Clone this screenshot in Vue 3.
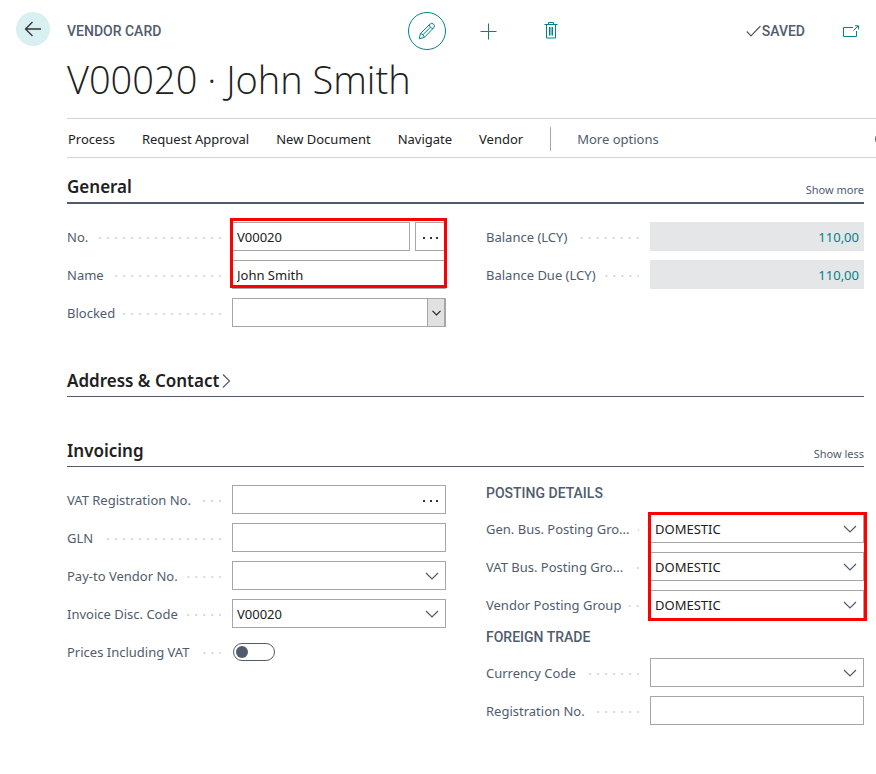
<script setup>
import { reactive } from 'vue'

const actions = ['Process', 'Request Approval', 'New Document', 'Navigate', 'Vendor']

const vendor = reactive({
  no: 'V00020',
  name: 'John Smith',
  blocked: '',
  balance: '110,00',
  balanceDue: '110,00',
  vatNo: '',
  gln: '',
  payTo: '',
  discCode: 'V00020',
  pricesInclVat: false,
  currency: '',
  registrationNo: ''
})

const balances = [
  { id: 'balance', label: 'Balance (LCY)' },
  { id: 'balanceDue', label: 'Balance Due (LCY)' }
]

const invoiceLookups = [
  { id: 'payTo', label: 'Pay-to Vendor No.' },
  { id: 'discCode', label: 'Invoice Disc. Code' }
]

const postingGroups = reactive([
  { id: 'gen-group', label: 'Gen. Bus. Posting Gro...', value: 'DOMESTIC' },
  { id: 'vat-group', label: 'VAT Bus. Posting Gro...', value: 'DOMESTIC' },
  { id: 'vendor-group', label: 'Vendor Posting Group', value: 'DOMESTIC' }
])
</script>

<template>
  <div class="page">
    <header class="top">
      <button class="back" type="button" aria-label="Back">
        <svg width="18" height="16" viewBox="0 0 18 16"><path d="M17 8H1.5M8.5 1L1.5 8l7 7" stroke-width="1.3" /></svg>
      </button>
      <div class="top-main">
        <span class="caps">VENDOR CARD</span>
        <div class="tools">
          <button class="tool edit" type="button" aria-label="Edit">
            <svg width="18" height="18" viewBox="0 0 18 18">
              <path d="M1.3 16.7l1.1-5L11.9 2.2a2.6 2.6 0 0 1 3.7 0 2.6 2.6 0 0 1 0 3.7L6.2 15.5zM2.4 11.7c1.9 0 3.8 1.9 3.8 3.8M11.4 2.8c.2 2.1 1.6 3.5 3.7 3.7M4.9 12.8l7.6-7.6" />
            </svg>
          </button>
          <button class="tool" type="button" aria-label="New">
            <svg width="17" height="17" viewBox="0 0 17 17"><path d="M8.5 0.5v16M0.5 8.5h16" /></svg>
          </button>
          <button class="tool" type="button" aria-label="Delete">
            <svg width="14" height="18" viewBox="0 0 14 18">
              <path d="M0.5 2.5h13M2.5 2.5v13.5h9v-13.5M4.5 2.5V0.5h5v2M5.5 5v8.5M7 5v8.5M8.5 5v8.5" />
            </svg>
          </button>
        </div>
        <div class="status">
          <svg width="16" height="12" viewBox="0 0 16 12"><path d="M0.8 6.5l4.2 4.3L14.5 1" stroke-width="1.2" /></svg>
          <span class="caps">SAVED</span>
          <button class="popout" type="button" aria-label="Open in new window">
            <svg width="17" height="12" viewBox="0 0 17 12">
              <path d="M10 2.5H0.5v9h13V6M10.5 5.5L15 1M12 0.8h3.5v3.5" />
            </svg>
          </button>
        </div>
      </div>
    </header>

    <main class="body">
      <h1>V00020 · John Smith</h1>

      <nav class="bar">
        <button v-for="a in actions" :key="a" type="button">{{ a }}</button>
        <button class="more" type="button">More options</button>
        <button class="info" type="button" aria-label="Details">
          <svg width="16" height="16" viewBox="0 0 16 16"><circle cx="8" cy="8" r="7.5" /><path d="M8 7v5M8 4v1" /></svg>
        </button>
      </nav>

      <div class="sections">
        <section>
          <div class="head strong">
            <h2>General</h2>
            <a href="#">Show more</a>
          </div>
          <div class="columns">
            <div class="rows">
              <div class="rows marked marked-vendor">
                <div class="row">
                  <label for="no">No.</label>
                  <span class="leader"></span>
                  <div class="split">
                    <input id="no" v-model="vendor.no" class="box" type="text" />
                    <button class="box assist" type="button" aria-label="Choose number">
                      <svg class="dots" width="16" height="4" viewBox="0 0 16 4"><path d="M0 2h2v2H0zM7 2h2v2H7zM13 2h2v2h-2z" /></svg>
                    </button>
                  </div>
                </div>
                <div class="row">
                  <label for="name">Name</label>
                  <span class="leader"></span>
                  <input id="name" v-model="vendor.name" class="box field" type="text" />
                </div>
              </div>
              <div class="row">
                <label for="blocked">Blocked</label>
                <span class="leader"></span>
                <div class="stack field">
                  <select id="blocked" v-model="vendor.blocked" class="box">
                    <option value=""></option>
                    <option>Payment</option>
                    <option>All</option>
                  </select>
                  <span class="drop">
                    <svg width="9" height="6" viewBox="0 0 9 6"><path d="M0.5 0.8l4 4 4-4" stroke-width="1.2" /></svg>
                  </span>
                </div>
              </div>
            </div>
            <div class="rows">
              <div v-for="b in balances" :key="b.id" class="row">
                <label :for="b.id">{{ b.label }}</label>
                <span class="leader"></span>
                <input :id="b.id" :value="vendor[b.id]" class="box field amount" type="text" readonly />
              </div>
            </div>
          </div>
        </section>

        <section>
          <div class="head">
            <h2>Address &amp; Contact</h2>
            <svg class="expand" width="9" height="16" viewBox="0 0 9 16"><path d="M1 1.5L7.5 8 1 14.5" stroke-width="1.2" /></svg>
          </div>
        </section>

        <section>
          <div class="head">
            <h2>Invoicing</h2>
            <a href="#">Show less</a>
          </div>
          <div class="columns">
            <div class="rows">
              <div class="row">
                <label for="vatNo">VAT Registration No.</label>
                <span class="leader"></span>
                <div class="stack field">
                  <input id="vatNo" v-model="vendor.vatNo" class="box" type="text" />
                  <svg class="dots end" width="16" height="4" viewBox="0 0 16 4"><path d="M0 2h2v2H0zM7 2h2v2H7zM13 2h2v2h-2z" /></svg>
                </div>
              </div>
              <div class="row">
                <label for="gln">GLN</label>
                <span class="leader"></span>
                <input id="gln" v-model="vendor.gln" class="box field" type="text" />
              </div>
              <div v-for="l in invoiceLookups" :key="l.id" class="row">
                <label :for="l.id">{{ l.label }}</label>
                <span class="leader"></span>
                <div class="stack field">
                  <select :id="l.id" v-model="vendor[l.id]" class="box">
                    <option value=""></option>
                    <option>V00020</option>
                  </select>
                  <svg class="chevron end" width="14" height="8" viewBox="0 0 14 8"><path d="M1 1l6 6 6-6" stroke-width="1.2" /></svg>
                </div>
              </div>
              <div class="row">
                <label for="prices">Prices Including VAT</label>
                <span class="leader"></span>
                <div class="field">
                  <input id="prices" v-model="vendor.pricesInclVat" class="toggle" type="checkbox" />
                </div>
              </div>
            </div>

            <div class="groups">
              <div class="rows">
                <h3 class="caps">POSTING DETAILS</h3>
                <div class="rows marked marked-groups">
                  <div v-for="g in postingGroups" :key="g.id" class="row">
                    <label :for="g.id">{{ g.label }}</label>
                    <span class="leader"></span>
                    <div class="stack field">
                      <select :id="g.id" v-model="g.value" class="box">
                        <option>DOMESTIC</option>
                      </select>
                      <svg class="chevron end" width="14" height="8" viewBox="0 0 14 8"><path d="M1 1l6 6 6-6" stroke-width="1.2" /></svg>
                    </div>
                  </div>
                </div>
              </div>
              <div class="rows">
                <h3 class="caps">FOREIGN TRADE</h3>
                <div class="row">
                  <label for="currency">Currency Code</label>
                  <span class="leader"></span>
                  <div class="stack field">
                    <select id="currency" v-model="vendor.currency" class="box">
                      <option value=""></option>
                    </select>
                    <svg class="chevron end" width="14" height="8" viewBox="0 0 14 8"><path d="M1 1l6 6 6-6" stroke-width="1.2" /></svg>
                  </div>
                </div>
                <div class="row">
                  <label for="regNo">Registration No.</label>
                  <span class="leader"></span>
                  <input id="regNo" v-model="vendor.registrationNo" class="box field" type="text" />
                </div>
              </div>
            </div>
          </div>
        </section>
      </div>
    </main>
  </div>
</template>

<style>
body {
  background: #fff;
}
</style>

<style scoped>
.page {
  --slate: #505c6d;
  --teal: #00828a;
  --ink: #212121;
  --line: #a6a6a6;
  font: 13px/20px 'Noto Sans', 'Open Sans', sans-serif;
  color: var(--ink);
  padding-bottom: 48px;
  overflow: hidden;
}

button,
input,
select {
  font: inherit;
  color: inherit;
  margin: 0;
  padding: 0;
  border: 0;
  border-radius: 0;
  background: none;
  box-sizing: border-box;
}

svg {
  display: block;
  fill: none;
  stroke: currentColor;
}

.top {
  display: flex;
  gap: 17px;
  padding: 12px 0 0 16px;
}

.back {
  width: 34px;
  height: 34px;
  border-radius: 50%;
  background: #d9f0f2;
  display: grid;
  place-items: center;
  color: #333;
}

.top-main {
  flex: 1;
  display: grid;
  grid-template-columns: 10fr auto 9fr;
  align-items: center;
}

.caps {
  font: 500 14px/16px Roboto, sans-serif;
  color: var(--slate);
}

.tools {
  display: flex;
  gap: 24px;
  color: var(--teal);
}

.tool {
  width: 38px;
  height: 38px;
  display: grid;
  place-items: center;
}

.edit {
  border: 1px solid var(--teal);
  border-radius: 50%;
}

.status {
  display: flex;
  justify-content: flex-end;
  align-items: center;
  padding-right: 16px;
  color: var(--slate);
}

.popout {
  color: var(--teal);
  margin-left: 38px;
}

.body {
  padding-left: 67px;
}

h1 {
  margin: 0;
  padding: 2px 0 12px;
  font: 300 38px/54px 'Open Sans', 'Noto Sans', sans-serif;
}

.bar {
  display: flex;
  align-items: center;
  gap: 27px;
  height: 36px;
  border: solid #d0d3d8;
  border-width: 1px 0;
  padding: 2px 0 0 1px;
}

.more {
  color: var(--slate);
  border-left: 1px solid #a0a6b0;
  padding: 2px 0 2px 26px;
}

.info {
  margin: 0 -15px 0 auto;
  color: var(--slate);
}

.sections {
  display: grid;
  gap: 42px;
  padding: 17px 12px 0 0;
}

.head {
  display: flex;
  align-items: flex-end;
  padding-bottom: 3px;
  border-bottom: 1px solid var(--slate);
}

.strong {
  border-bottom-width: 2px;
}

h2 {
  margin: 0;
  font: 600 17px/24px 'Noto Sans', 'Open Sans', sans-serif;
}

.head a {
  margin-left: auto;
  font-size: 11px;
  line-height: 18px;
  color: var(--slate);
  text-decoration: none;
}

.expand {
  margin: 0 0 4px 3px;
  color: var(--slate);
}

.columns {
  display: grid;
  grid-template-columns: 1fr 1fr;
  gap: 39px;
  padding-top: 18px;
  align-items: start;
  --label: 165px;
}

.columns > :last-child {
  padding-left: 1px;
  --label: 164px;
}

.rows {
  display: grid;
  gap: 9px;
}

.groups {
  display: grid;
  gap: 10px;
}

h3.caps {
  margin: 0;
  padding-bottom: 4px;
}

.row {
  display: flex;
  align-items: center;
  height: 29px;
}

.row label {
  color: var(--slate);
  white-space: nowrap;
}

.leader {
  flex: 1;
  height: 5px;
  margin: 0 11px 0 8px;
  background: linear-gradient(to left, #d6d8db 2px, transparent 2px) right bottom / 8px 2px repeat-x;
}

.field,
.split {
  flex: none;
  width: calc(100% - var(--label));
}

.split {
  display: flex;
  gap: 5px;
}

.split input {
  flex: 1;
  min-width: 0;
}

.box {
  height: 29px;
  border: 1px solid var(--line);
  padding: 0 4px;
  background: #fff;
  appearance: none;
}

.assist {
  width: 31px;
  display: grid;
  place-items: center;
}

.stack {
  display: grid;
  align-items: center;
}

.stack > * {
  grid-area: 1 / 1;
}

.end {
  justify-self: end;
  margin-right: 7px;
  pointer-events: none;
}

.dots {
  fill: #333;
  stroke: none;
}

.chevron {
  color: var(--slate);
}

.drop {
  justify-self: end;
  width: 19px;
  height: 29px;
  box-sizing: border-box;
  display: grid;
  place-items: center;
  background: #e1e1e1;
  border: 1px solid var(--line);
  border-right-width: 2px;
  pointer-events: none;
}

.amount {
  border-color: #e5e6e8;
  background: #e5e6e8;
  color: var(--teal);
  text-align: right;
}

.toggle {
  display: flex;
  align-items: center;
  appearance: none;
  width: 42px;
  height: 18px;
  margin-left: 1px;
  border: 1px solid var(--slate);
  border-radius: 9px;
  padding: 0 2px;
}

.toggle::before {
  content: '';
  width: 12px;
  height: 12px;
  border-radius: 50%;
  background: var(--slate);
}

.toggle:checked {
  justify-content: flex-end;
}

.marked {
  position: relative;
}

/* Highlight frame laid over the fields of a group */
.marked::after {
  content: '';
  position: absolute;
  border: 3px solid #fe0000;
  pointer-events: none;
}

.marked-vendor::after {
  inset: -4px -1px 1px calc(var(--label) - 2px);
}

.marked-groups::after {
  inset: -2px -3px -2px calc(var(--label) - 2px);
}
</style>
